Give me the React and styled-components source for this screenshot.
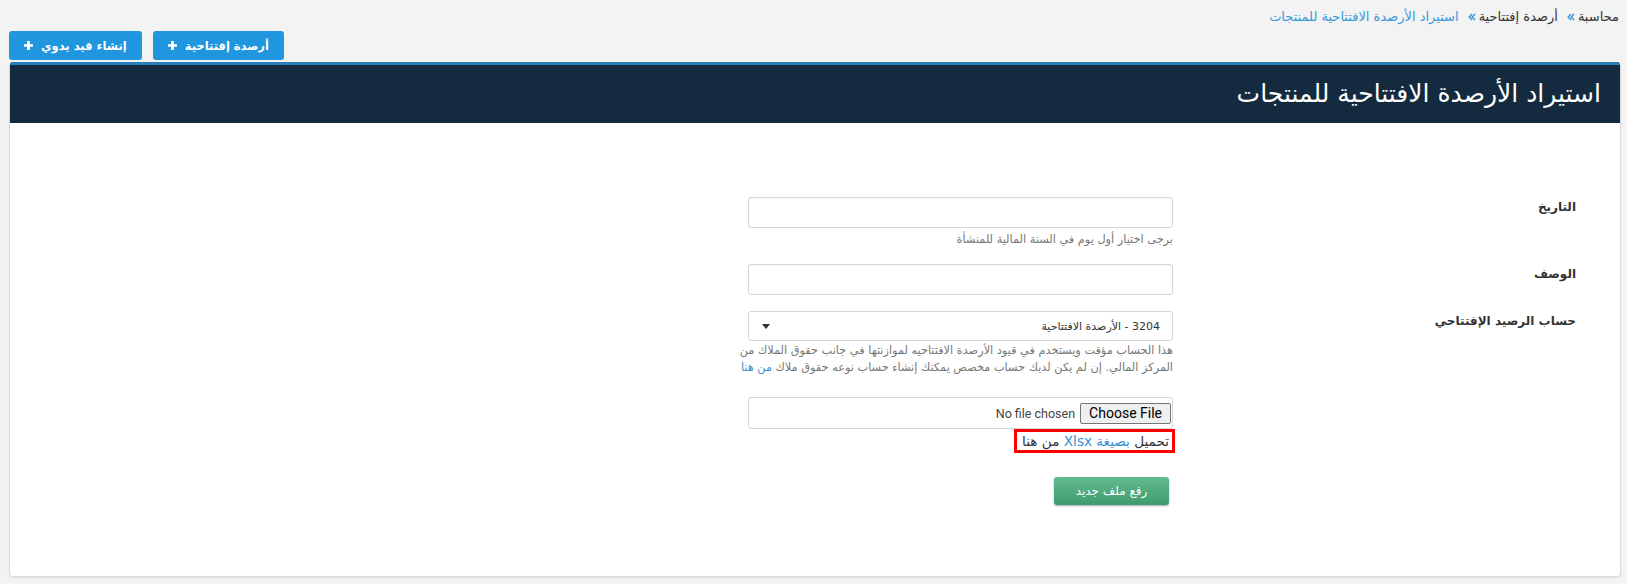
import React from "react";
import styled, { createGlobalStyle } from "styled-components";

const GlobalStyle = createGlobalStyle`
  html, body {
    margin: 0;
    background: #f3f3f3;
    font-family: "DejaVu Sans", "Noto Sans", sans-serif;
    color: #333;
  }
  * { box-sizing: border-box; }
`;

const Page = styled.div`
  direction: rtl;
  padding: 0 6px 0 9px;
  height: 584px;
  overflow: hidden;
`;

const Crumbs = styled.nav`
  display: flex;
  align-items: center;
  height: 31px;
  padding: 2px 2px 0 0;
  font-size: 13px;
`;

const Crumb = styled.span`
  color: ${(p) => (p.$active ? "#3a9ad9" : "#333")};
`;

const Sep = styled.span`
  display: flex;
  margin: 1px 3px 0 9px;
`;

const Actions = styled.div`
  display: flex;
  justify-content: flex-end;
  gap: 11px;
  margin-bottom: 2px;
`;

const ActionButton = styled.button`
  display: flex;
  align-items: center;
  gap: 8px;
  height: 29px;
  padding: 0 15px;
  border: none;
  border-radius: 3px;
  background: #1f96de;
  color: #fff;
  font-family: inherit;
  font-size: 11.5px;
  font-weight: bold;
  cursor: pointer;
`;

const Panel = styled.section`
  background: #fff;
  border: 1px solid #dcdcdc;
  border-top: none;
  border-radius: 4px;
  box-shadow: 0 1px 2px rgba(0, 0, 0, 0.08);
  overflow: hidden;
  height: 515px;
`;

const PanelHead = styled.header`
  background: #142a3e;
  border-top: 3px solid #2a7fb8;
  height: 61px;
  display: flex;
  align-items: center;
  padding: 0 19px 2px 0;
`;

const Title = styled.h1`
  margin: 0;
  color: #fff;
  font-size: 25px;
  font-weight: normal;
`;

const Body = styled.div`
  padding-top: 74px;
`;

const Row = styled.div`
  display: flex;
  margin-bottom: ${(p) => p.$gap || 16}px;
`;

const Label = styled.label`
  width: 447px;
  padding: 2px 44px 0 0;
  font-size: 12px;
  line-height: 17px;
  font-weight: bold;
  color: #333;
`;

const Field = styled.div`
  width: 425px;
  display: flex;
  flex-direction: column;
`;

const Input = styled.input`
  height: 31px;
  width: 100%;
  border: 1px solid #d6d6d6;
  border-radius: 3px;
  box-shadow: inset 0 1px 1px rgba(0, 0, 0, 0.04);
  outline: none;
  font-family: inherit;
`;

const SelectBox = styled.div`
  height: 30px;
  border: 1px solid #d6d6d6;
  border-radius: 3px;
  display: flex;
  align-items: center;
  justify-content: space-between;
  padding: 0 12px 0 13px;
  font-size: 11px;
  color: #333;
`;

const Caret = styled.span`
  width: 0;
  height: 0;
  border-left: 4px solid transparent;
  border-right: 4px solid transparent;
  border-top: 5px solid #333;
`;

const Help = styled.p`
  margin: ${(p) => p.$top || 3}px 0 0 -24px;
  font-size: 11.3px;
  line-height: 17px;
  color: #777;
`;

const Link = styled.a`
  color: #3a8fd0;
  text-decoration: none;
`;

const FileBox = styled.div`
  height: 32px;
  border: 1px solid #d6d6d6;
  border-radius: 3px;
  display: flex;
  align-items: center;
  gap: 5px;
  padding: 0 1px;
  font-family: "Roboto", "Liberation Sans", sans-serif;
  font-size: 12.5px;
  color: #444;
`;

const FileButton = styled.span`
  height: 21px;
  padding: 0 8px;
  display: flex;
  align-items: center;
  border: 1px solid #767676;
  border-radius: 2px;
  background: #efefef;
  color: #000;
  font-size: 14px;
`;

const Download = styled.div`
  align-self: flex-start;
  margin-right: -2px;
  border: 3px solid #f00;
  padding: 0 3px 0 5px;
  font-size: 13.6px;
  line-height: 18px;
  color: #333;
`;

const Submit = styled.button`
  align-self: flex-start;
  margin: 24px 4px 0 0;
  width: 115px;
  height: 28px;
  border: none;
  border-radius: 3px;
  background: linear-gradient(#62bb8e, #3f9b6d);
  box-shadow: 0 1px 2px rgba(0, 0, 0, 0.35);
  color: #fff;
  font-family: inherit;
  font-size: 12px;
  cursor: pointer;
`;

const PlusIcon = () => (
  <svg width="9" height="9" viewBox="0 0 10 10">
    <path d="M3.5 0h3v3.5H10v3H6.5V10h-3V6.5H0v-3h3.5z" fill="#fff" />
  </svg>
);

const Chevrons = () => (
  <svg width="8" height="8" viewBox="0 0 8 8">
    <path d="M4 1L1.2 4L4 7M7 1L4.2 4L7 7" fill="none" stroke="#3a9ad9" strokeWidth="1.5" />
  </svg>
);

export default function App() {
  return (
    <>
      <GlobalStyle />
      <Page>
        <Crumbs>
          <Crumb>محاسبة</Crumb>
          <Sep><Chevrons /></Sep>
          <Crumb>أرصدة إفتتاحية</Crumb>
          <Sep><Chevrons /></Sep>
          <Crumb $active>استيراد الأرصدة الافتتاحية للمنتجات</Crumb>
        </Crumbs>
        <Actions>
          <ActionButton>
            أرصدة إفتتاحية <PlusIcon />
          </ActionButton>
          <ActionButton>
            إنشاء قيد يدوي <PlusIcon />
          </ActionButton>
        </Actions>
        <Panel>
          <PanelHead>
            <Title>استيراد الأرصدة الافتتاحية للمنتجات</Title>
          </PanelHead>
          <Body>
            <Row>
              <Label>التاريخ</Label>
              <Field>
                <Input />
                <Help>برجى اختيار أول يوم في السنة المالية للمنشأة</Help>
              </Field>
            </Row>
            <Row>
              <Label>الوصف</Label>
              <Field>
                <Input />
              </Field>
            </Row>
            <Row $gap={21}>
              <Label>حساب الرصيد الإفتتاحي</Label>
              <Field>
                <SelectBox>
                  <span>3204 - الأرصدة الافتتاحية</span>
                  <Caret />
                </SelectBox>
                <Help $top={1}>
                  هذا الحساب مؤقت ويستخدم في قيود الأرصدة الافتتاحيه لموازنتها في جانب حقوق الملاك من
                  المركز المالي. إن لم يكن لديك حساب مخصص يمكنك إنشاء حساب نوعه حقوق ملاك <Link href="#">من هنا</Link>
                </Help>
              </Field>
            </Row>
            <Row>
              <Label />
              <Field>
                <FileBox>
                  <FileButton>Choose File</FileButton>
                  <span>No file chosen</span>
                </FileBox>
                <Download>
                  تحميل <Link href="#">بصيغة Xlsx</Link> من هنا
                </Download>
                <Submit>رفع ملف جديد</Submit>
              </Field>
            </Row>
          </Body>
        </Panel>
      </Page>
    </>
  );
}
